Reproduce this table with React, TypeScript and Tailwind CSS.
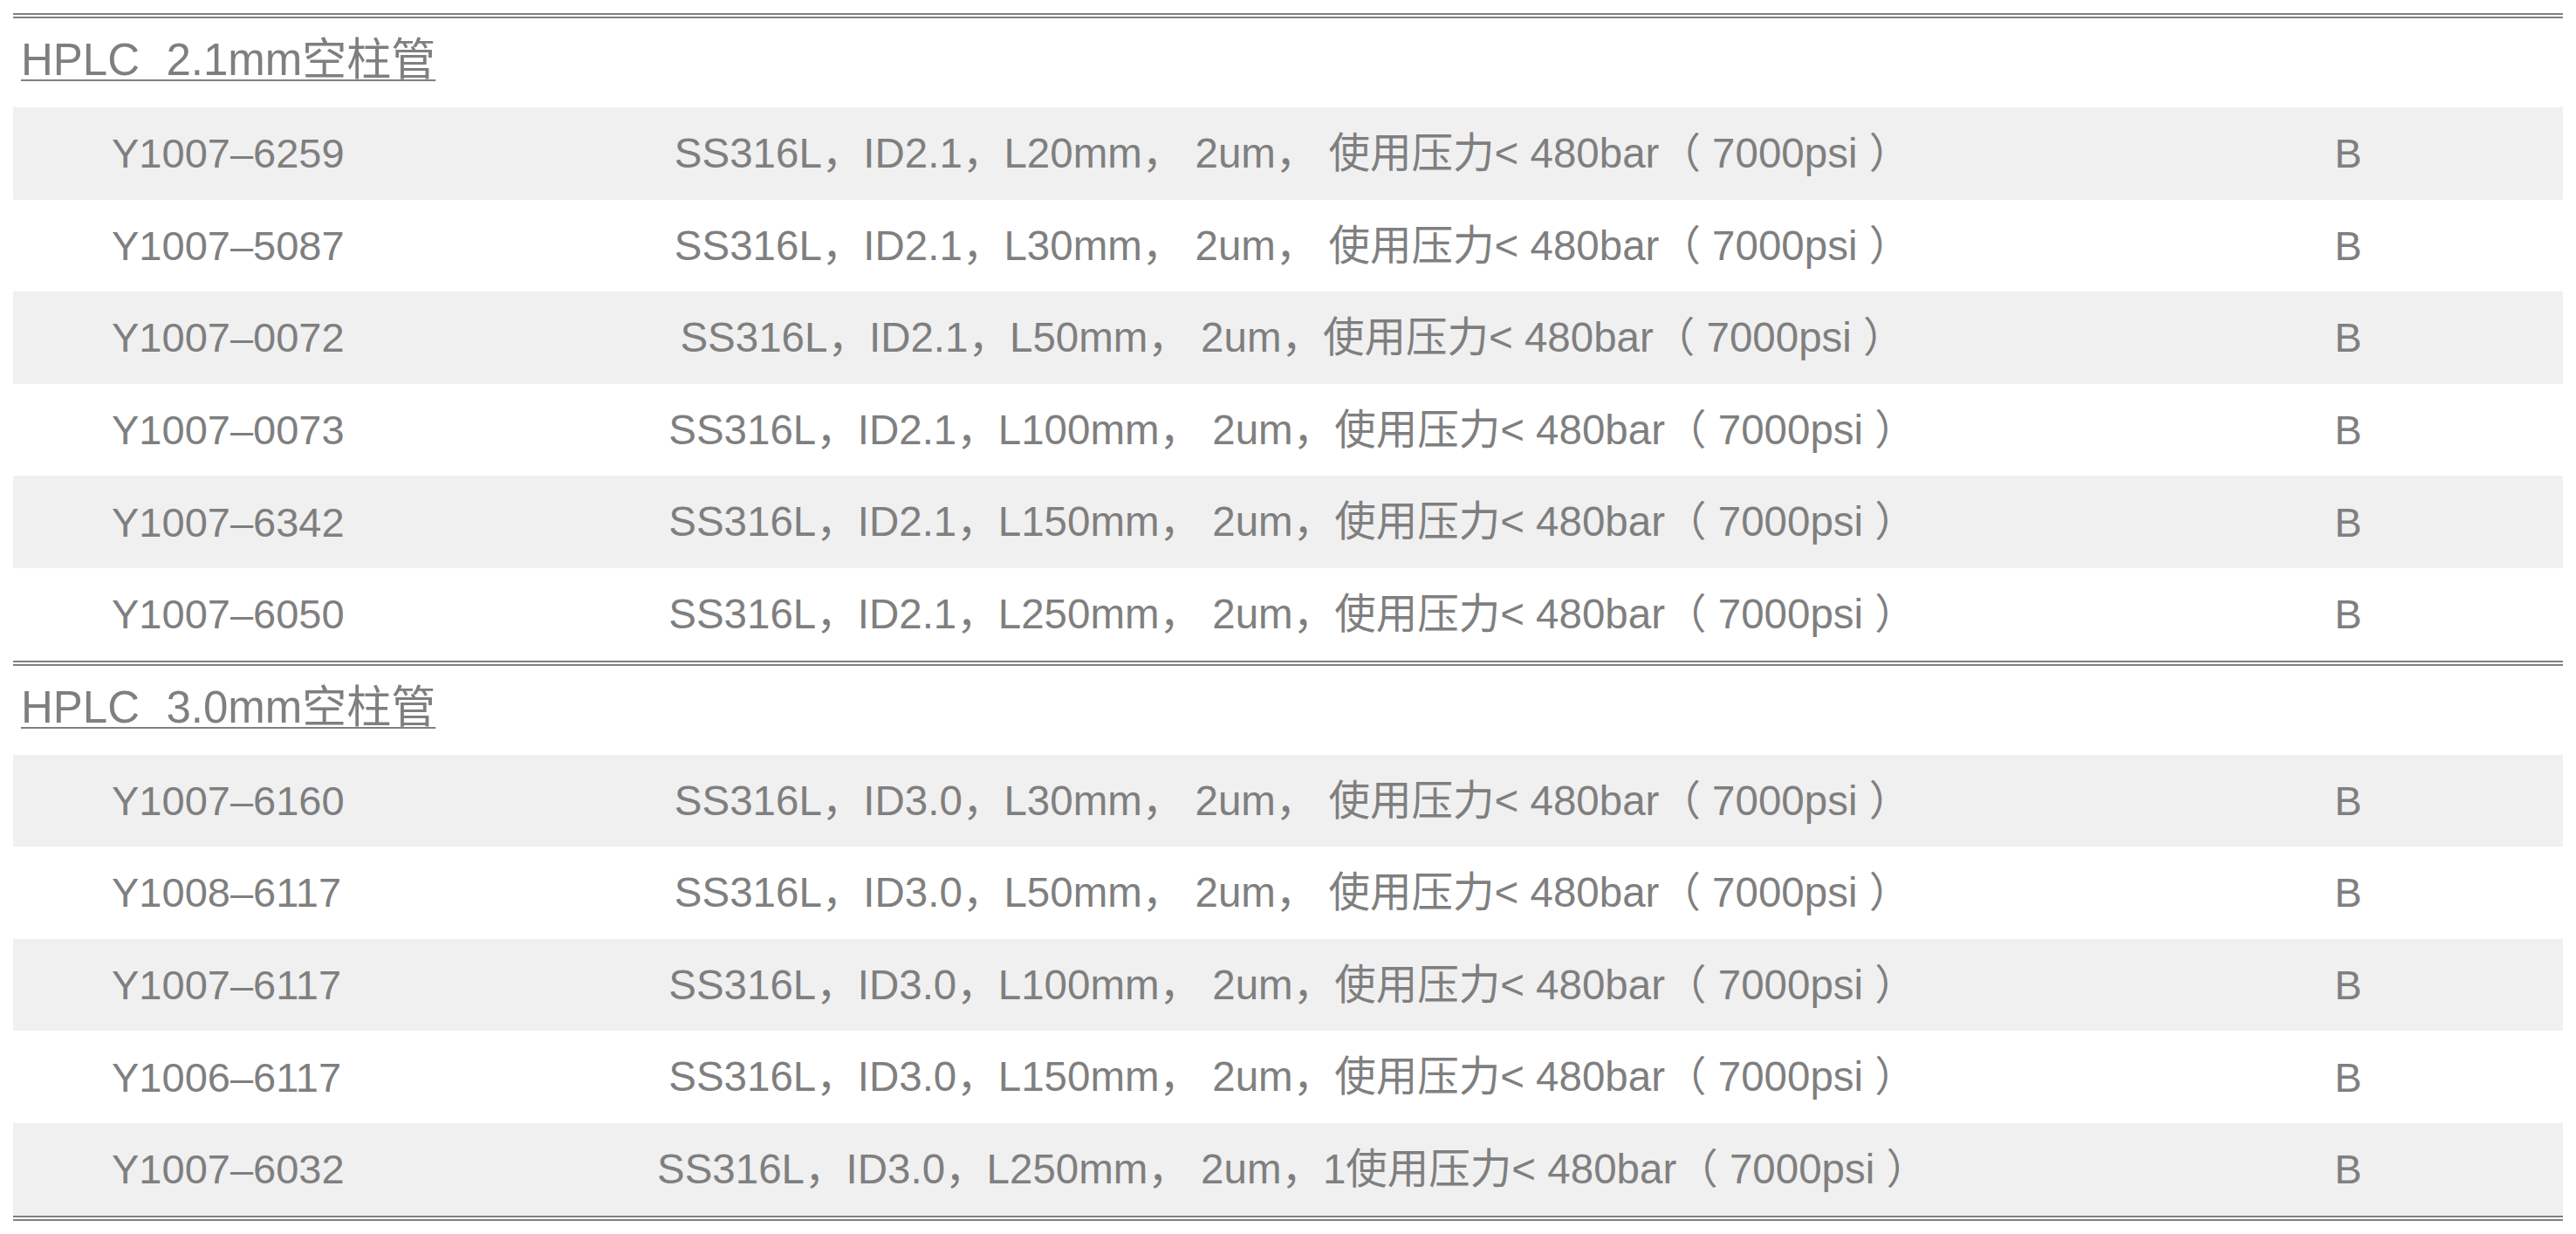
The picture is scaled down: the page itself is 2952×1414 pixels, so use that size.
const FONT = "font-['Liberation_Sans','Noto_Sans_CJK_SC',sans-serif]";

interface Part {
  code: string;
  spec: string;
}

interface Section {
  title: string;
  parts: Part[];
}

const sections: Section[] = [
  {
    title: "HPLC\u00a0\u00a02.1mm空柱管",
    parts: [
      { code: "Y1007–6259", spec: "SS316L，ID2.1，L20mm， 2um， 使用压力< 480bar（ 7000psi ）" },
      { code: "Y1007–5087", spec: "SS316L，ID2.1，L30mm， 2um， 使用压力< 480bar（ 7000psi ）" },
      { code: "Y1007–0072", spec: "SS316L，ID2.1，L50mm， 2um，使用压力< 480bar（ 7000psi ）" },
      { code: "Y1007–0073", spec: "SS316L，ID2.1，L100mm， 2um，使用压力< 480bar（ 7000psi ）" },
      { code: "Y1007–6342", spec: "SS316L，ID2.1，L150mm， 2um，使用压力< 480bar（ 7000psi ）" },
      { code: "Y1007–6050", spec: "SS316L，ID2.1，L250mm， 2um，使用压力< 480bar（ 7000psi ）" },
    ],
  },
  {
    title: "HPLC\u00a0\u00a03.0mm空柱管",
    parts: [
      { code: "Y1007–6160", spec: "SS316L，ID3.0，L30mm， 2um， 使用压力< 480bar（ 7000psi ）" },
      { code: "Y1008–6117", spec: "SS316L，ID3.0，L50mm， 2um， 使用压力< 480bar（ 7000psi ）" },
      { code: "Y1007–6117", spec: "SS316L，ID3.0，L100mm， 2um，使用压力< 480bar（ 7000psi ）" },
      { code: "Y1006–6117", spec: "SS316L，ID3.0，L150mm， 2um，使用压力< 480bar（ 7000psi ）" },
      { code: "Y1007–6032", spec: "SS316L，ID3.0，L250mm， 2um，1使用压力< 480bar（ 7000psi ）" },
    ],
  },
];

const PartRow = ({ part, shaded }: { part: Part; shaded: boolean }) => (
  <div
    className={`grid grid-cols-[491px_1950px_1fr] h-[105.6px] items-center text-[47px] leading-none ${
      shaded ? "bg-[#f0f0f0]" : "bg-white"
    }`}
  >
    <div className="pl-[113px] whitespace-pre">{part.code}</div>
    <div className="text-center whitespace-pre text-[47.5px]">{part.spec}</div>
    <div className="text-center pr-[11px]">B</div>
  </div>
);

const App = () => {
  return (
    <div className={`bg-white min-h-[1414px] px-[15px] pt-[15px] text-[#7f7f7f] ${FONT}`}>
      {sections.map((section) => (
        <div key={section.title} className="border-t-[6px] border-double border-[#808080]">
          <div className="h-[102px] flex items-center pb-[7px] pl-[9px]">
            <span className="text-[51px] leading-none [word-spacing:1px] underline decoration-2 underline-offset-[5px] whitespace-pre">
              {section.title}
            </span>
          </div>
          {section.parts.map((part, i) => (
            <PartRow key={part.code + i} part={part} shaded={i % 2 === 0} />
          ))}
        </div>
      ))}
      <div className="border-t-[6px] border-double border-[#808080]" />
    </div>
  );
};

export default App;
